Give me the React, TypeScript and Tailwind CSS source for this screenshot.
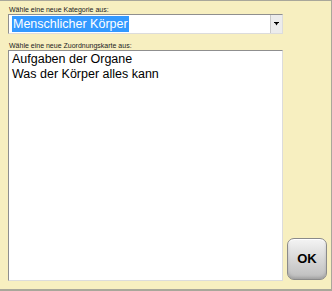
import { useState } from 'react';

export default function App() {
  const [category] = useState('Menschlicher Körper');
  const cards = ['Aufgaben der Organe', 'Was der Körper alles kann'];

  return (
    <div
      className="w-[332px] h-[291px] bg-[#f7efc0] border-t border-r border-b-2 border-[#a9a79a] flex flex-col pl-[8px] pr-[4px] pt-[4px] text-black"
      style={{ fontFamily: '"Liberation Sans", Arial, sans-serif' }}
    >
      {/* Category */}
      <p className="text-[7px] leading-[9px] text-[#222] pl-[1px]">Wähle eine neue Kategorie aus:</p>
      <div className="w-[275px] h-[20px] bg-white border border-t-[#8f8f8f] border-l-[#8f8f8f] border-r-[#dcdcdc] border-b-[#dcdcdc] flex items-center pl-[3px]">
        <span className="bg-[#3399ff] text-white text-[12.5px] leading-[16px] px-[1px]">{category}</span>
        <div className="ml-auto w-[12px] h-[18px] bg-[#ececec] border-l border-[#c8c8c8] flex items-center justify-center">
          <svg width="5" height="4" viewBox="0 0 5 4">
            <path d="M0 0h5v1H0zM1 1h3L2.5 3.5z" fill="#000" />
          </svg>
        </div>
      </div>

      {/* Cards */}
      <div className="flex flex-1 mt-[7px] gap-[4px] items-end pb-[8px]">
        <div className="flex flex-col h-full">
          <p className="text-[7px] leading-[9px] text-[#222] pl-[1px]">Wähle eine neue Zuordnungskarte aus:</p>
          <div className="w-[275px] flex-1 bg-white border border-t-[#8f8f8f] border-l-[#8f8f8f] border-r-[#dcdcdc] border-b-[#dcdcdc] px-[3px] pt-[1px]">
            {cards.map((c) => (
              <p key={c} className="text-[12.5px] leading-[15px]">
                {c}
              </p>
            ))}
          </div>
        </div>
        <button className="w-[40px] h-[42px] rounded-[7px] border border-[#8a8a8a] bg-gradient-to-b from-[#f4f4f4] via-[#d8d8d8] to-[#bdbdbd] shadow-[inset_0_1px_0_#fff,inset_0_-2px_3px_rgba(0,0,0,0.15)] flex items-center justify-center mb-[1px]">
          <span className="text-[13px] font-bold">OK</span>
        </button>
      </div>
    </div>
  );
}
